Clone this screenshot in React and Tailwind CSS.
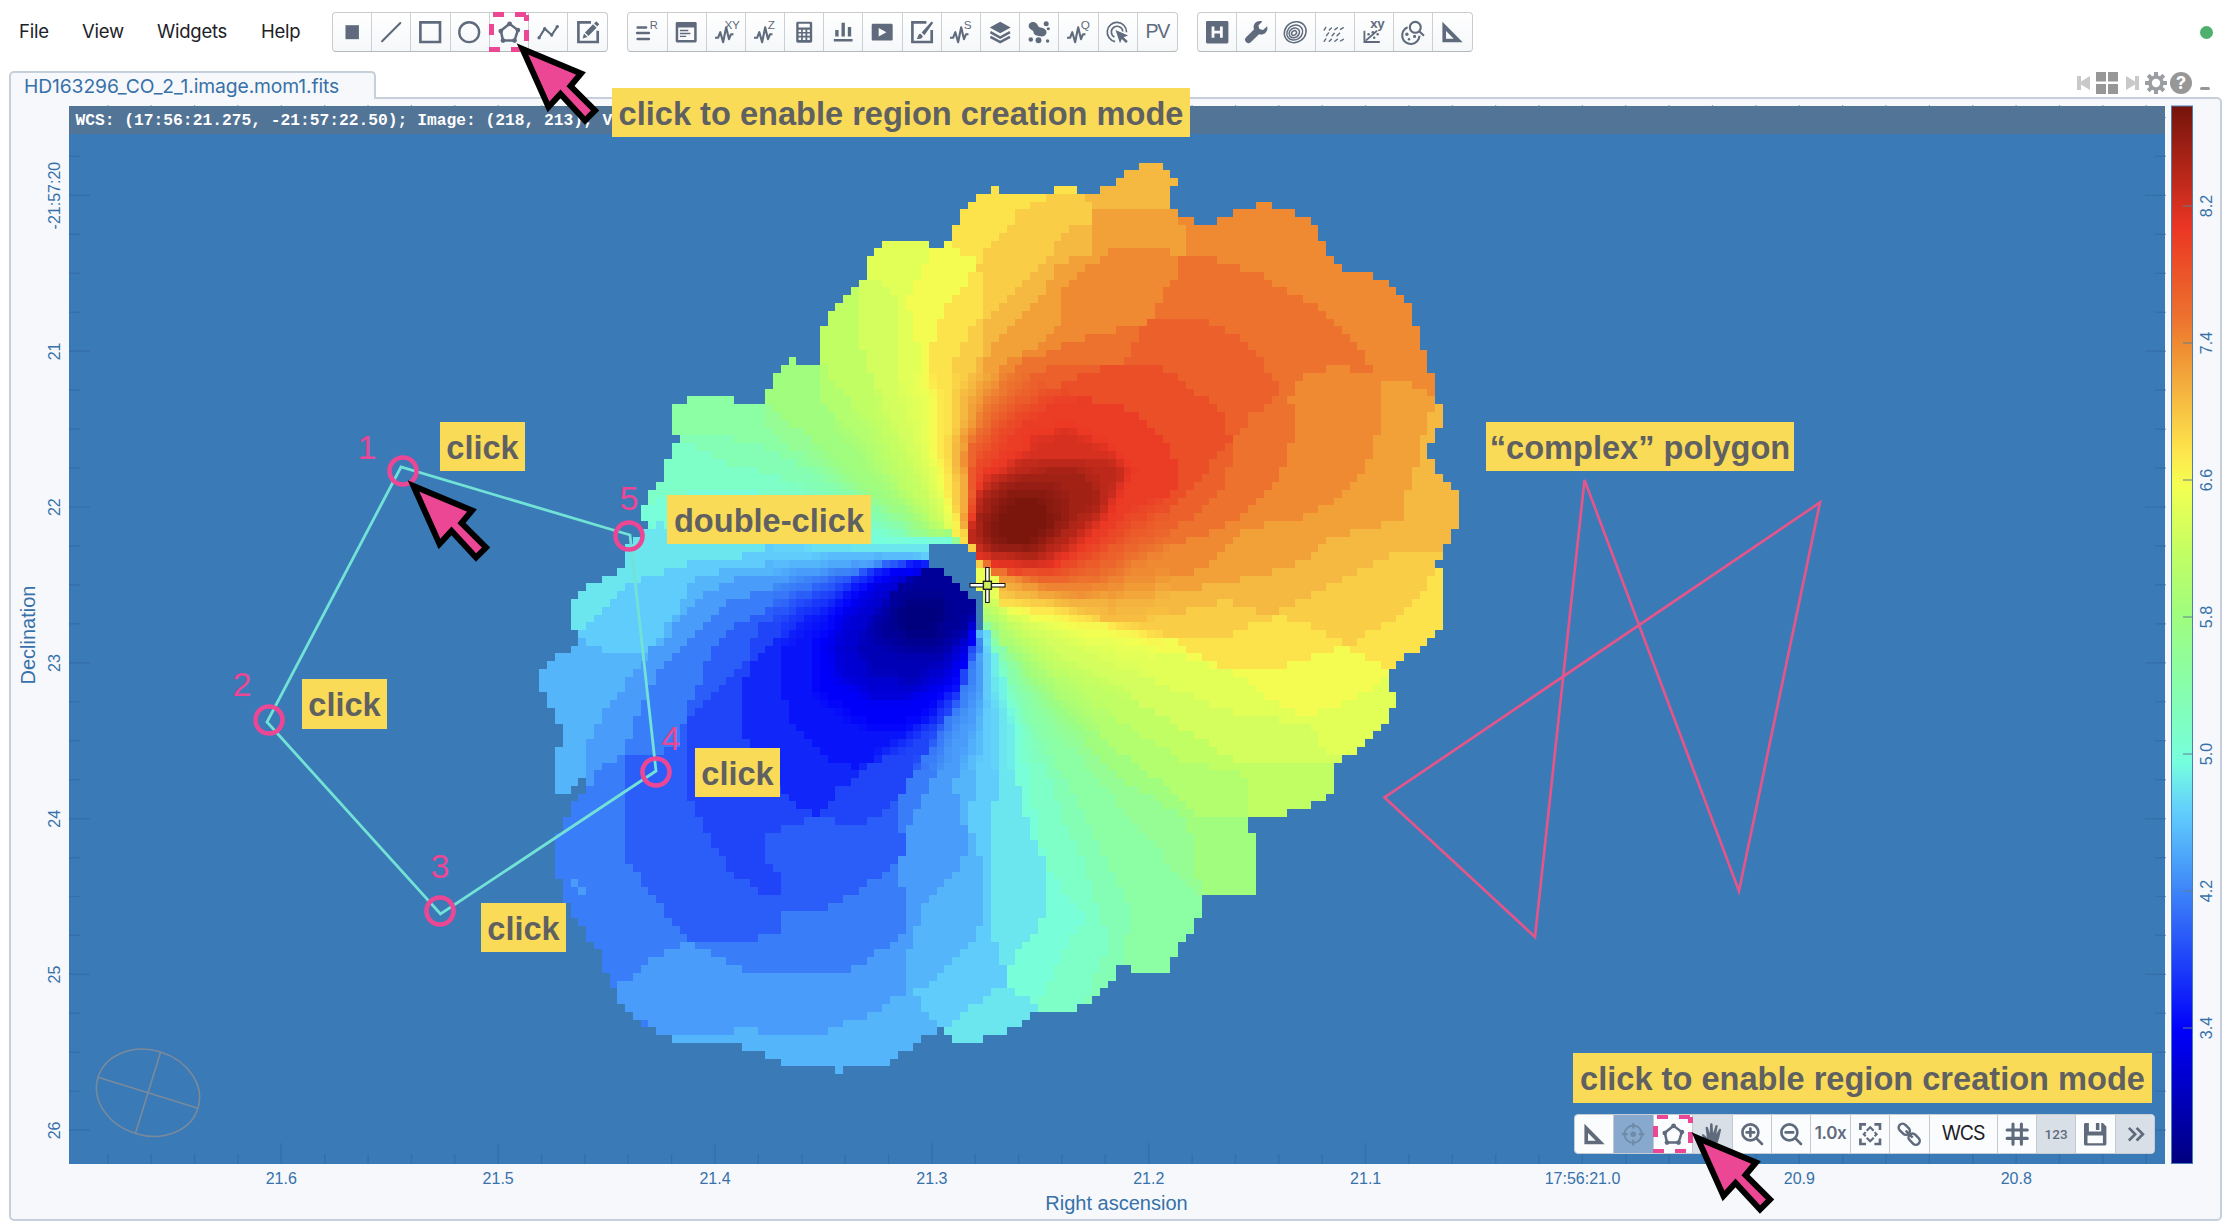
import React from "react";

/* ---------- velocity map ---------- */

const STOPS = [
  [0, 0, 0, 127], [0.125, 0, 0, 250], [0.255, 60, 130, 248], [0.305, 84, 180, 251], [0.335, 98, 208, 252],
  [0.38, 118, 255, 222], [0.45, 136, 254, 172], [0.52, 160, 253, 125], [0.58, 196, 254, 98],
  [0.64, 243, 255, 82], [0.672, 254, 230, 76], [0.725, 245, 184, 64], [0.775, 239, 138, 50], [0.8, 236, 114, 46],
  [0.885, 235, 54, 36], [1, 117, 20, 12],
];

function color(t) {
  const v = Math.max(0, Math.min(1, t));
  for (let i = 1; i < STOPS.length; i++) {
    if (v <= STOPS[i][0]) {
      const a = STOPS[i - 1];
      const b = STOPS[i];
      const f = (v - a[0]) / (b[0] - a[0]);
      return `rgb(${[1, 2, 3].map((k) => Math.round(a[k] + (b[k] - a[k]) * f)).join(",")})`;
    }
  }
  return "rgb(117,20,12)";
}

const pts = (s) => s.trim().split(/\s+/).map((p) => p.split(",").map(Number));

const OUTLINE = pts(`1006,38 1044,38 1044,61 1058,61 1058,85 1070,85 1070,106 1058,106 1058,179 1070,179 1070,202 1096,202 1096,225 1135,225 1135,202 1160,202 1160,179 1199,179 1199,155 1225,155 1225,179 1264,179 1264,202 1290,202 1290,225 1303,225 1303,272 1315,272 1315,318 1328,318 1328,342 1341,342 1341,366 1393,366 1393,389 1418,389 1418,412 1431,412 1431,436 1444,436 1444,459 1457,459 1457,530 1470,530 1470,600 1482,600 1482,670 1495,670 1495,764 1507,764 1507,833 1495,833 1495,880 1482,880 1482,927 1495,927 1495,974 1507,974 1507,997 1520,997 1520,1020 1534,1020 1534,1137 1520,1137 1520,1182 1507,1182 1507,1230 1495,1230 1495,1254 1507,1254
1507,1440 1495,1440 1495,1463 1482,1463 1482,1487 1470,1487 1470,1510 1444,1510 1444,1534 1431,1534 1431,1557 1418,1557 1418,1628 1431,1628 1431,1675 1418,1675 1418,1722 1405,1722 1405,1745 1393,1745 1393,1768 1380,1768 1380,1792 1367,1792 1367,1815 1341,1815 1341,1839 1328,1839 1328,1932 1315,1932 1315,1955 1290,1955 1290,1979 1251,1979 1251,2002 1187,2002 1187,2049 1199,2049 1199,2235 1109,2235 1109,2307 1096,2307 1096,2353 1083,2353 1083,2376 1070,2376 1070,2423 1058,2423 1058,2470 993,2470 993,2447 967,2447 967,2493 954,2493 954,2517 941,2517 941,2540 928,2540 928,2563 903,2563 903,2586 826,2586 826,2610 813,2610 813,2633 787,2633 787,2656 749,2656 749,2679 697,2679 697,2656 684,2656 684,2633 672,2633 672,2656 646,2656 646,2679 633,2679 633,2703 607,2703 607,2726 594,2726 594,2749 517,2749 517,2772 504,2772 504,2749 415,2749 415,2726 389,2726 389,2703 350,2703 350,2679 235,2679 235,2656 209,2656 209,2633 184,2633 184,2610 170,2610 170,2586 158,2586 158,2563 145,2563 145,2517 132,2517 132,2470 119,2470 119,2400 106,2400 106,2376 93,2376 93,2330 80,2330 80,2307 67,2307 67,2260 54,2260 54,2188 41,2188 41,2049 54,2049 54,2002 67,2002 67,1955 80,1955 80,1932 93,1932 93,1885 80,1885 80,1908 67,1908 67,1932 41,1932 41,1792 54,1792 54,1722 41,1722 41,1675 28,1675 28,1628 15,1628 15,1557 28,1557 28,1534 41,1534 41,1510 67,1510 67,1487 80,1487 80,1440 67,1440
67,1350 80,1350 80,1324 93,1324 93,1300 119,1300 119,1277 145,1277 145,1254 158,1254 158,1206 158,1182 170,1182 170,1160 184,1160 184,1137 196,1137 196,1112 184,1112 184,1067 196,1067 196,1020 209,1020 209,997 222,997 222,927 235,927 235,880 248,880 248,857 235,857 235,764 261,764 261,740 338,740 338,764 389,764 389,717 402,717 402,670 415,670 415,646 427,646 427,622 440,622 440,646 479,646 479,530 492,530 492,482 504,482 504,459 517,459 517,436 530,436 530,412 543,412 543,389 556,389 556,318 569,318 569,295 582,295 582,272 658,272 658,295 684,295 684,272 697,272 697,225 710,225 710,179 723,179 723,155 736,155 736,131 762,131 762,108 775,108 775,131 864,131 864,108 903,108 903,131 941,131 941,108 967,108 967,85 980,85 980,61 1006,61`);

const HOLE = pts("658,1182 723,1182 723,1206 736,1206 736,1324 749,1324 749,1440 736,1440 736,1350 723,1350 723,1324 710,1324 710,1300 697,1300 697,1277 684,1277 684,1254 658,1254");

const LEVELS = [
  // receding side, from the green fan inwards
  [0.415, "600,1160 440,1050 300,1010 180,1070 100,900 100,0 1600,0 1600,2800 838,2800 838,2560 915,2300 850,2150 810,1750 755,1480 700,1170"],
  [0.44, "620,1165 460,1010 330,940 245,860 200,800 200,0 1600,0 1600,2800 920,2800 920,2540 955,2380 925,2200 880,2000 800,1620 755,1440 700,1170"],
  [0.46, "640,1165 520,1020 400,900 320,857 200,857 200,0 1600,0 1600,2800 975,2800 975,2380 1000,2300 930,2050 870,1850 790,1560 755,1430 700,1170"],
  [0.49, "645,1160 540,1030 430,890 389,820 389,700 389,0 1600,0 1600,2236 1109,2236 1050,2130 1000,2030 930,1870 870,1740 800,1540 755,1420 700,1160"],
  [0.52, "655,1150 560,1030 480,900 402,770 389,740 389,0 1600,0 1600,2236 1105,2236 1096,2110 1085,2010 980,1890 880,1700 800,1530 755,1410 700,1150"],
  [0.55, "665,1140 590,1000 530,870 479,750 479,0 1600,0 1600,2003 1100,2003 1080,1950 970,1800 870,1640 800,1500 758,1400 700,1140"],
  [0.575, "670,1140 600,980 556,820 500,700 479,640 479,0 1600,0 1600,2003 1187,2003 1185,1880 1080,1830 960,1700 850,1540 760,1390 700,1140"],
  [0.597, "680,1130 610,900 569,720 543,560 543,380 543,0 1600,0 1600,1839 1170,1839 1090,1750 980,1630 870,1530 770,1385 700,1130"],
  [0.618, "690,1130 650,950 607,700 607,450 580,400 540,390 540,0 1600,0 1600,1815 1320,1815 1280,1720 1140,1680 1030,1590 900,1490 775,1375 700,1120"],
  [0.642, "697,1130 660,900 650,700 635,540 620,450 660,320 670,280 670,0 1600,0 1600,1575 1410,1575 1370,1640 1280,1695 1230,1660 1175,1580 1120,1540 1000,1490 880,1440 775,1370"],
  [0.672, "703,1130 672,900 660,600 685,480 723,400 735,330 697,290 690,0 1600,0 1600,1580 1415,1580 1400,1535 1345,1490 1240,1550 1145,1555 1060,1470 900,1410 775,1365"],
  [0.698, "706,1130 690,900 697,750 705,600 745,500 750,400 736,350 775,260 810,180 870,131 905,131 910,0 1600,0 1600,1235 1507,1235 1457,1370 1400,1430 1355,1490 1300,1440 1240,1395 1150,1455 1040,1460 970,1425 870,1380 775,1350"],
  [0.725, "712,1130 700,900 715,720 745,600 752,500 790,430 830,370 880,260 890,225 928,225 928,160 915,131 915,0 1600,0 1600,1230 1495,1215 1430,1205 1370,1260 1300,1320 1220,1395 1150,1350 1070,1390 960,1420 880,1365 775,1330"],
  [0.75, "716,1130 710,900 725,760 760,600 800,520 850,420 870,340 928,310 930,190 960,179 1068,179 1068,0 1600,0 1600,740 1495,760 1480,800 1475,850 1470,930 1450,1000 1440,1100 1400,1130 1320,1160 1280,1235 1170,1290 1050,1330 960,1360 850,1340 760,1290"],
  [0.775, "720,1130 715,900 740,760 790,630 850,570 878,500 880,410 930,340 970,295 1058,295 1065,320 1083,320 1083,230 1070,200 1070,0 1600,0 1600,740 1490,740 1470,715 1440,695 1405,695 1405,800 1380,960 1300,1090 1180,1140 1110,1260 1000,1300 900,1345 860,1320 760,1275"],
  [0.8, "722,1130 720,900 750,780 800,650 880,580 1030,510 1045,420 1070,370 1068,318 1110,320 1200,370 1290,460 1350,560 1385,640 1393,670 1340,655 1290,660 1250,740 1265,800 1250,920 1220,1020 1150,1130 1040,1200 940,1300 860,1310 760,1265"],
  [0.825, "723,1130 725,900 780,760 850,650 980,640 1018,510 1105,505 1170,560 1210,640 1245,720 1190,800 1160,880 1150,1000 1100,1100 1000,1200 930,1280 850,1295 760,1250"],
  [0.85, "724,1130 735,930 790,780 850,720 955,650 1045,650 1110,740 1150,800 1155,870 1110,980 1070,1060 1000,1140 940,1220 880,1270 790,1270 745,1230"],
  [0.873, "724,1140 740,960 800,820 860,745 925,745 1000,790 1040,860 1070,930 1070,1020 990,1110 940,1190 870,1265 790,1255 740,1230"],
  [0.905, "724,1150 745,990 800,930 840,850 900,835 960,900 990,950 975,1020 940,1130 900,1200 850,1250 780,1240 737,1210"],
  [0.93, "726,1160 750,1000 810,930 965,930 980,960 960,1050 930,1130 890,1190 850,1230 775,1225 737,1205"],
  [0.955, "735,1150 750,1030 800,980 870,950 915,950 940,1010 940,1070 905,1130 870,1180 830,1225 775,1205 745,1180"],
  [0.975, "745,1140 765,1045 790,1000 865,1000 890,1060 890,1110 850,1160 840,1200 770,1200 748,1170"],
  [0.995, "760,1120 790,1050 850,1050 865,1110 840,1170 780,1190 762,1160"],
  // approaching side, from the cyan fan inwards
  [0.358, "655,1190 560,1185 450,1130 320,1080 240,1160 222,1120 160,1150 0,1150 0,2800 838,2800 838,2560 787,2510 790,2450 850,2300 850,2130 830,2060 800,1880 800,1700 765,1500 749,1420 700,1300"],
  [0.333, "650,1210 500,1200 400,1185 350,1220 260,1240 230,1254 170,1300 130,1370 93,1420 80,1440 0,1440 0,2800 684,2800 684,2633 710,2600 750,2540 787,2510 780,2430 765,2350 760,2100 775,1800 765,1600 750,1450 700,1300"],
  [0.305, "648,1215 490,1215 430,1230 280,1275 260,1320 235,1400 205,1510 120,1508 93,1470 80,1445 0,1440 0,2800 684,2800 684,2633 655,2590 635,2530 700,2440 745,2330 750,2160 735,2100 725,2000 752,1700 749,1470 700,1300"],
  [0.28, "646,1222 560,1235 480,1250 330,1290 262,1370 230,1450 195,1510 160,1600 120,1680 106,1740 93,1800 93,1934 0,1934 0,2656 335,2656 340,2635 375,2635 378,2656 480,2656 560,2590 615,2530 625,2400 650,2270 715,2130 725,2060 710,2000 700,1900 748,1650 748,1480 700,1300"],
  [0.252, "645,1225 570,1240 500,1260 400,1310 312,1370 270,1450 220,1540 190,1640 170,1720 158,1810 106,1870 93,1934 0,1934 0,2660 225,2660 145,2570 145,2510 200,2430 265,2375 300,2420 365,2465 440,2470 520,2460 550,2440 620,2350 610,2150 620,2050 660,1900 697,1750 735,1600 745,1480 700,1300"],
  [0.22, "645,1228 580,1240 510,1280 430,1330 370,1400 320,1450 290,1540 260,1690 240,1800 160,1815 158,2120 185,2200 235,2310 265,2370 365,2370 410,2340 425,2270 480,2280 540,2220 600,2150 620,2100 607,2000 600,1960 650,1830 710,1650 735,1500 742,1450 700,1300"],
  [0.192, "645,1230 580,1250 530,1290 450,1350 380,1430 350,1550 265,1690 262,1950 290,2050 325,2150 380,2230 420,2240 410,2180 390,2130 395,2050 470,2005 550,2025 600,1960 660,1780 710,1640 730,1500 740,1440 700,1300"],
  [0.165, "645,1230 570,1265 520,1310 460,1380 400,1480 352,1580 352,1760 400,1880 430,1960 470,2000 510,1920 560,1850 640,1750 700,1640 725,1520 736,1440 700,1300"],
  [0.145, "645,1235 580,1265 530,1310 480,1390 420,1490 420,1650 440,1740 500,1830 540,1855 600,1790 660,1720 700,1640 725,1500 736,1420 700,1300"],
  [0.125, "645,1250 600,1260 550,1310 500,1390 465,1480 470,1620 520,1700 570,1745 620,1740 670,1670 710,1580 736,1440 700,1300"],
  [0.09, "645,1255 600,1280 560,1330 520,1400 495,1500 510,1580 560,1640 620,1650 670,1610 710,1530 736,1420 700,1290"],
  [0.055, "650,1254 610,1300 585,1340 550,1430 530,1500 560,1570 620,1600 650,1590 690,1530 725,1440 736,1380 700,1260"],
  [0.025, "655,1254 620,1300 600,1330 570,1430 580,1480 640,1520 680,1500 720,1430 736,1360 690,1250"],
  [0, "640,1340 605,1380 605,1430 640,1470 670,1450 685,1400 680,1340"],
  // isolated samples and the sliver beside the nucleus
  [0.28, "67,2190 80,2190 80,2212 93,2212 93,2236 80,2236 80,2212 67,2212"],
  [0.63, "736,1254 762,1254 775,1330 760,1370 749,1324 736,1324"],
].map(([t, s]) => [t, pts(s)]);

function inside(poly, x, y) {
  let hit = false;
  for (let i = 0, j = poly.length - 1; i < poly.length; j = i++) {
    const [xi, yi] = poly[i];
    const [xj, yj] = poly[j];
    if (yi > y !== yj > y && x < ((xj - xi) * (y - yi)) / (yj - yi) + xi) hit = !hit;
  }
  return hit;
}

const COLS = 120;
const ROWS = 118;
const CELL = 7.79;

function buildMap() {
  const raw = [];
  for (let r = 0; r < ROWS; r++) {
    const row = [];
    for (let c = 0; c < COLS; c++) {
      const x = 2.7 + (c + 0.5) * 12.857;
      const y = 38 + (r + 0.5) * 23.37;
      let v = null;
      if (inside(OUTLINE, x, y) && !inside(HOLE, x, y)) {
        v = 0.385;
        for (const [t, poly] of LEVELS) if (inside(poly, x, y)) v = t;
      }
      row.push(v);
    }
    raw.push(row);
  }
  const paths = {};
  for (let r = 0; r < ROWS; r++) {
    let start = 0;
    let prev = null;
    for (let c = 0; c <= COLS; c++) {
      let k = null;
      if (c < COLS && raw[r][c] !== null) {
        const v = raw[r][c];
        let sum = v * 2;
        let n = 2;
        // samples far from the nucleus keep their plain contour steps
        const near = Math.hypot(c - 56, r - 52) < 26;
        for (const [dr, dc] of near ? [[0, 1], [1, 0], [0, -1], [-1, 0]] : []) {
          const w = raw[r + dr]?.[c + dc];
          if (w !== null && w !== undefined && Math.abs(w - v) < 0.06) {
            sum += w;
            n += 1;
          }
        }
        k = color(Math.round((sum / n) * 160) / 160);
      }
      if (k !== prev) {
        if (prev) {
          const x0 = Math.round(531.6 + start * CELL);
          const x1 = Math.round(531.6 + c * CELL);
          const y0 = Math.round(162.7 + r * CELL);
          const y1 = Math.round(162.7 + (r + 1) * CELL);
          paths[prev] = (paths[prev] || "") + `M${x0} ${y0}H${x1}V${y1}H${x0}Z`;
        }
        start = c;
        prev = k;
      }
    }
  }
  return Object.entries(paths);
}

const MAP = buildMap();
const range = (a, b) => Array.from({ length: b - a + 1 }, (_, i) => a + i);

const RA = ["21.6", "21.5", "21.4", "21.3", "21.2", "21.1", "17:56:21.0", "20.9", "20.8"];
const DEC = ["-21:57:20", "21", "22", "23", "24", "25", "26"];
const BAR = ["8.2", "7.4", "6.6", "5.8", "5.0", "4.2", "3.4"];
const VERTICES = [[403, 471], [269, 720], [440, 911], [656, 772], [629, 536]];

function Chart() {
  return (
    <svg
      className="block h-[1120px] w-[2209px] [font-family:'Liberation_Sans',sans-serif]"
      viewBox="11 99 2209 1120"
      fill="#3771a9"
    >
      <defs>
        <linearGradient id="bar" x1="0" y1="1" x2="0" y2="0">
          {STOPS.map((s) => (
            <stop key={s[0]} offset={s[0]} stopColor={color(s[0])} />
          ))}
        </linearGradient>
      </defs>
      <rect x="69" y="106" width="2096" height="1058" fill="#397ab7" />
      <g shapeRendering="crispEdges">
        {MAP.map(([k, d]) => (
          <path key={k} fill={k} d={d} />
        ))}
      </g>
      <g stroke="#33619a" strokeOpacity="0.5" strokeWidth="1.2">
        {range(-4, 43).map((i) => {
          const x = 281.3 + i * 43.37;
          const h = i % 5 === 0 ? 21 : 10;
          return <path key={i} d={`M${x} 1164v${-h}M${x} 105v${h}`} />;
        })}
        {range(-2, 24).map((i) => {
          const y = 195.4 + i * 38.95;
          const w = i % 4 === 0 ? 21 : 11;
          return <path key={i} d={`M69 ${y}h${w}M2166 ${y}h${-w}`} />;
        })}
      </g>
      <rect x="69" y="106" width="2096" height="28" fill="#527496" />
      <rect x="2171.5" y="106" width="21" height="1057.5" fill="url(#bar)" stroke="#4a7db3" />
      <g fontSize="16" textAnchor="middle">
        {RA.map((s, i) => (
          <text key={s} x={281.3 + i * 216.87} y="1184">{s}</text>
        ))}
        {DEC.map((s, i) => (
          <text key={s} transform={`translate(60 ${195.6 + i * 155.8}) rotate(-90)`}>{s}</text>
        ))}
        {BAR.map((s, i) => (
          <g key={s}>
            <path d={`M2183 ${206 + i * 137}h9`} stroke="#5f7f8f" />
            <text transform={`translate(2212 ${206 + i * 137}) rotate(-90)`}>{s}</text>
          </g>
        ))}
      </g>
      <g fontSize="20" textAnchor="middle">
        <text x="1116.5" y="1209.5">Right ascension</text>
        <text transform="translate(34.5 635) rotate(-90)">Declination</text>
      </g>
      <g transform="translate(148 1092.7) rotate(17.2)" fill="none" stroke="#7a8a9b" strokeWidth="1.6">
        <ellipse rx="52.3" ry="42.7" />
        <path d="M-52.3 0H52.3M0-42.7V42.7" />
      </g>
      <path d="M401 467L267 722L440.500 914L656 771L630 535Z" fill="none" stroke="#72e2d6" strokeWidth="2.8" />
      <path d="M1584.500 480L1535 937L1384.500 797.500L1820 502.500L1739 891Z" fill="none" stroke="#e4568a" strokeWidth="2.700" />
      <path d="M987.400 567v36M969.500 585.300h36" stroke="#111" strokeWidth="4.6" />
      <path d="M987.400 568v34M970.500 585.300h34" stroke="#fff" strokeWidth="2.4" />
      <rect x="983.400" y="581.300" width="8" height="8" fill="#cdf057" stroke="#222" strokeWidth="1.4" />
      <g fill="none" stroke="#ec4794" strokeWidth="4.600">
        {VERTICES.map(([x, y]) => (
          <circle key={x} cx={x} cy={y} r="13.500" />
        ))}
      </g>
    </svg>
  );
}

/* ---------- icons, on a 16-unit grid ---------- */

const line = { fill: "none", stroke: "currentColor", strokeWidth: 1.5 };

const ICONS = {
  point: <path d="M3.200 3h9.600v10H3.200z" />,
  line: <path d="M1.500 14.500L14.500 1.500" {...line} strokeLinecap="round" />,
  rect: <path d="M1 1h14v14H1z" {...line} strokeWidth="1.900" />,
  circle: <circle cx="8" cy="8" r="7.100" {...line} strokeWidth="1.700" />,
  polygon: (
    <>
      <path d="M8.300 2L2 7l1.600 7h8.200L14.200 6.500z" {...line} strokeWidth="1.800" />
      <circle cx="8.300" cy="2" r="1.700" /><circle cx="2" cy="7.200" r="1.700" /><circle cx="3.600" cy="14" r="1.700" />
      <circle cx="11.800" cy="14" r="1.700" /><circle cx="14.200" cy="6.500" r="1.700" />
    </>
  ),
  polyline: (
    <>
      <path d="M1.500 12L5.500 5.500L10.500 10L14.500 4" {...line} />
      <circle cx="1.500" cy="12" r="1.200" /><circle cx="5.500" cy="5.500" r="1.200" /><circle cx="10.500" cy="10" r="1.200" /><circle cx="14.500" cy="4" r="1.200" />
    </>
  ),
  edit: (
    <>
      <path d="M10 1H1v14h13.800V7" {...line} strokeWidth="1.900" />
      <path d="M4 12.500l1-3.500 2.500 2.500zM5.700 8.200l5.800-5.800 2.500 2.500-5.800 5.800zM12.200 1.700L13.800.2l2.100 2.100-1.400 1.600z" />
    </>
  ),
  listR: (
    <>
      <path d="M1.200 4.700h6M.8 8.500h8.400M1.200 12.900h8" {...line} strokeWidth="1.800" strokeLinecap="round" />
      <text x="9.800" y="5.600" fontSize="8">R</text>
    </>
  ),
  app: (
    <path fillRule="evenodd" d="M1.500.7h13c.6 0 1 .4 1 1v12.600c0 .6-.4 1-1 1h-13c-.6 0-1-.4-1-1V1.700c0-.6.4-1 1-1zM2.300 4.700v8.800h11.400V4.700zM3.500 6.300h6v1h-6zM3.500 8.400h7.500v1H3.500zM3.500 10.500h4.500v1H3.500z" />
  ),
  wave: <path d="M0 11h2.200l1.600-4 2 7.200L8 3.500l2 8.500 1.400-3.500h1.800" {...line} strokeWidth="1.500" strokeLinejoin="round" transform="translate(0 1)" />,
  calc: (
    <path fillRule="evenodd" d="M3.500.5h9c.8 0 1.200.5 1.200 1.200v12.600c0 .7-.4 1.200-1.200 1.200h-9c-.8 0-1.200-.5-1.200-1.200V1.700c0-.7.400-1.200 1.200-1.200zM4 2v2.600h8V2zM4 6.200v1.600h1.800V6.200zM7 6.200v1.600h1.900V6.200zM10.200 6.200v1.600H12V6.200zM4 9v1.600h1.800V9zM7 9v1.600h1.900V9zM10.200 9v1.600H12V9zM4 11.800v1.700h1.800v-1.700zM7 11.800v1.700h1.900v-1.700zM10.200 11.800v1.700H12v-1.700z" />
  ),
  bars: <path d="M2.300 6.500h2.400V11H2.300zM6.800 1.300h2.400V11H6.800zM11.300 4.300h2.400V11h-2.400zM1.300 12.800h13.400v1.800H1.300z" />,
  video: <path fillRule="evenodd" d="M1.500 2h13c.6 0 1 .4 1 1v10c0 .6-.4 1-1 1h-13c-.6 0-1-.4-1-1V3c0-.6.4-1 1-1zM5.500 5v6l5.500-3z" />,
  brush: (
    <>
      <path d="M11 1H1v14h13.800V6.500" {...line} strokeWidth="1.900" />
      <path d="M4 12.700c1.300-.6.6-3.200 2.800-3.500l1.600 1.600c0 2-2.400 2.500-4.400 1.900zM7.600 8.300L14.600.4l1.300.9-6.300 8.900z" />
    </>
  ),
  layers: (
    <>
      <path d="M8 .5L15.500 4.600 8 8.700.5 4.600z" />
      <path d="M1 8l7 3.800L15 8M1 11.300l7 3.800 7-3.800" {...line} strokeWidth="1.800" />
    </>
  ),
  blobs: (
    <>
      <path d="M.5 3.800C.3 1.500 2.800 0 5 1c2.300 1 1.600 3.200 4 3.700 2.500.4 5 1.800 4 4.500-.9 2.400-3.500 2-5.200 1.500C5.500 10.200 4 9.800 4 8 4 6.500.7 6.200.5 3.800z" />
      <circle cx="13" cy="2" r="1.800" /><circle cx="2" cy="13.300" r="1.600" /><circle cx="7.500" cy="13.800" r="2.100" /><circle cx="14" cy="14.300" r="1.200" /><circle cx="14.500" cy="5.500" r="1.100" />
    </>
  ),
  cursorTarget: (
    <>
      <path d="M6.500 14.700A6.900 6.900 0 1 1 14.700 8M6 11.500A4.100 4.100 0 1 1 12 7.500" {...line} strokeWidth="1.200" />
      <path d="M6.800 6.500l9 3.800-3.200 1.300 3 2.900-1.300 1.300-3-3-1.300 3.100z" />
    </>
  ),
  header: <path fillRule="evenodd" d="M1 0h14c.6 0 1 .4 1 1v14c0 .6-.4 1-1 1H1c-.6 0-1-.4-1-1V1c0-.6.4-1 1-1zM4 4v8h2V9h4v3h2V4h-2v3H6V4z" />,
  wrench: <path d="M15.800 3.800l-2.900 2.700-2.600-.7-.7-2.500L12.400.4c-2-.8-4.100-.2-5.300 1.200C6 3 6 4.500 6.400 6L.8 11.700a2.200 2.200 0 0 0 3.300 3.400L10 9.400c1.600.5 3.200.3 4.500-.8 1.300-1.200 1.900-3 1.300-4.800z" />,
  contour: (
    <g {...line} strokeWidth="1.050" transform="rotate(-35 8 8)">
      <ellipse cx="8" cy="8" rx="8.100" ry="7.200" /><ellipse cx="7.600" cy="8" rx="5.900" ry="5.100" /><ellipse cx="7.200" cy="8" rx="3.900" ry="3.300" /><ellipse cx="7" cy="8" rx="1.900" ry="1.500" />
    </g>
  ),
  vectors: (
    <path d="M.8 6.500l1.200-2M4.500 6.500l1.500-1.500M8.500 6.200l1.800-1.400M12.500 6l2-1.200M2.500 10.500l1.500-2M6.500 10.500L8 8.800M10 10.500l1.800-1.800M.8 14.500l1.200-1.700M4.500 14.500l1.500-1.500M8.500 14.500l1.800-1.500M12.500 14.300l2-1.200" {...line} strokeWidth="1" strokeLinecap="round" />
  ),
  scatter: (
    <>
      <path d="M1 7v8h11M2 14l8-7" {...line} strokeWidth="1.300" />
      <circle cx="4" cy="9.500" r=".9" /><circle cx="7" cy="8" r=".9" /><circle cx="8" cy="12" r=".9" /><circle cx="10.500" cy="9.500" r=".9" />
      <text x="5.200" y="5" fontSize="9.500" fontWeight="bold">xy</text>
    </>
  ),
  catalog: (
    <>
      <circle cx="9.500" cy="4.500" r="3.900" {...line} />
      <path d="M12.300 7.300l3.400 3.200M4 4.500a6.200 6.200 0 1 0 8.500 6" {...line} />
      <circle cx="3.500" cy="9.500" r="1.200" /><circle cx="9" cy="11" r="1.100" /><circle cx="5" cy="13" r=".9" />
    </>
  ),
  setSquare: <path fillRule="evenodd" d="M1 .5L15.500 15.200H1zM3.600 7.200v5.500h5.500z" />,
  locate: (
    <g>
      <circle cx="8" cy="8" r="6.200" {...line} strokeWidth="1.300" /><circle cx="8" cy="8" r="2" />
      <path d="M8 0v4M8 12v4M0 8h4M12 8h4" {...line} strokeWidth="1.600" />
    </g>
  ),
  hand: <path d="M6 15.500C4 14 2.300 11.500.8 9.200c-.5-.9.6-1.500 1.400-.8l2 1.900L3.300 3.600c-.1-1.100 1.400-1.300 1.700-.3l1.200 4.200L6.500 1C6.600-.2 8.200-.2 8.300 1l.3 6.300L10.300 2c.4-1 1.800-.6 1.600.4l-1 5.500 2-3.400c.6-.8 1.700-.2 1.400.7-.9 3-1.200 7.300-3.300 10.300z" />,
  zoomIn: <path d="M11.200 11.200L15 15M6.700 4v5.400M4 6.700h5.400M12.400 6.700a5.700 5.700 0 1 1-11.400 0 5.700 5.700 0 0 1 11.400 0z" {...line} strokeWidth="1.900" strokeLinecap="round" />,
  zoomOut: <path d="M11.200 11.200L15 15M4 6.700h5.400M12.400 6.700a5.700 5.700 0 1 1-11.400 0 5.700 5.700 0 0 1 11.400 0z" {...line} strokeWidth="1.900" strokeLinecap="round" />,
  fit: (
    <>
      <path d="M1 5V1h4M11 1h4v4M15 11v4h-4M5 15H1v-4" {...line} strokeWidth="1.900" />
      <path d="M5.500 5.500L8 3l2.500 2.500M5.500 10.500L8 13l2.500-2.500M4.800 6.500L3.400 8l1.400 1.500M11.200 6.500L12.600 8l-1.400 1.500" {...line} strokeWidth="1.500" />
    </>
  ),
  link: (
    <g {...line} strokeWidth="1.800" transform="rotate(45 8 8)">
      <rect x="-1.500" y="5.200" width="9" height="5.600" rx="2.800" /><rect x="8.500" y="5.200" width="9" height="5.600" rx="2.800" /><path d="M4.500 8h7" />
    </g>
  ),
  grid: <path d="M5 .8v14.400M11 .8v14.400M.8 5h14.400M.8 11h14.400" {...line} strokeWidth="2.200" strokeLinecap="round" />,
  save: <path fillRule="evenodd" d="M1 0h2.500v6h8.800V0H13.500L16 2.500V15c0 .6-.4 1-1 1H1c-.6 0-1-.4-1-1V1c0-.6.4-1 1-1zM8.500 0h2.500v5H8.500zM2.500 9v5.500h11V9z" />,
  chevrons: <path d="M3.500 3.500L8 8l-4.500 4.500M9 3.500L13.500 8 9 12.500" {...line} strokeWidth="1.900" />,
};

function Icon({ name, sup }) {
  return (
    <svg className="h-[22.400px] w-[22.400px] overflow-visible [font-family:'Liberation_Sans',sans-serif]" viewBox="0 0 16 16" fill="currentColor">
      {ICONS[name]}
      {sup && <text x={sup.length > 1 ? 6.8 : 9.8} y="5.400" fontSize="8.400">{sup}</text>}
    </svg>
  );
}

const Dashes = () => (
  <svg className="absolute -inset-px h-[40px] w-[40px]" viewBox="0 0 40 40" fill="#ec4794">
    <path d="M4 0h11v5H4zM26 0h11v3h3v6h-5V5h-9zM0 12h5v11H0zM35 18h5v11h-5zM0 35h11v5H0zM22 35h11v5H22z" />
  </svg>
);

function Group({ items }) {
  return (
    <div className="flex h-[40px] divide-x divide-[#cdd0d2] rounded-[4px] border border-[#c9ccce] border-b-[#b3b8bb] bg-gradient-to-b from-white to-[#f5f7f9] text-[#5f6b7c]">
      {items.map(([name, sup], i) => (
        <div key={i} className="relative flex w-[39.2px] items-center justify-center">
          {name === "pv" ? (
            <span className="text-[19.500px] tracking-[-1.2px] [font-family:'Liberation_Sans',sans-serif]">PV</span>
          ) : (
            <Icon name={name} sup={sup} />
          )}
          {name === "polygon" && <Dashes />}
        </div>
      ))}
    </div>
  );
}

const G1 = [["point"], ["line"], ["rect"], ["circle"], ["polygon"], ["polyline"], ["edit"]];
const G2 = [["listR"], ["app"], ["wave", "XY"], ["wave", "Z"], ["calc"], ["bars"], ["video"], ["brush"], ["wave", "S"], ["layers"], ["blobs"], ["wave", "Q"], ["cursorTarget"], ["pv"]];
const G3 = [["header"], ["wrench"], ["contour"], ["vectors"], ["scatter"], ["catalog"], ["setSquare"]];

function ImageToolbar() {
  const cell = "relative flex w-[39.4px] items-center justify-center";
  return (
    <div className="absolute left-[1574px] top-[1114px] flex h-[40px] w-[581px] divide-x divide-[#c5cad0] overflow-hidden rounded-[4px] border border-[#c5ccd4] bg-[#fbfcfd] text-[#5f6b7c]">
      <div className={cell}><Icon name="setSquare" /></div>
      <div className="flex w-[39.4px] items-center justify-center bg-[#86a9cd] text-[#6f8ba9]"><Icon name="locate" /></div>
      <div className={cell}><Icon name="polygon" /><Dashes /></div>
      <div className="flex w-[39.4px] items-center justify-center bg-[#d9dfe6]"><Icon name="hand" /></div>
      <div className={cell}><Icon name="zoomIn" /></div>
      <div className={cell}><Icon name="zoomOut" /></div>
      <div className="flex w-[39.4px] items-center justify-center text-[17px] font-semibold tracking-[-0.3px]">1.0x</div>
      <div className={cell}><Icon name="fit" /></div>
      <div className={cell}><Icon name="link" /></div>
      <div className="flex w-[68px] items-center justify-center text-[19.500px] tracking-[-1.100px] text-[#1c2127]">WCS</div>
      <div className={cell}><Icon name="grid" /></div>
      <div className="flex w-[39.4px] items-center justify-center bg-[#d9dfe6] text-[13.500px] font-medium [font-family:Roboto,sans-serif]">123</div>
      <div className={cell}><Icon name="save" /></div>
      <div className="flex grow items-center justify-center bg-[#d9dfe6]"><Icon name="chevrons" /></div>
    </div>
  );
}

function Arrow({ className }) {
  return (
    <svg className={"absolute h-[86px] w-[86px] overflow-visible " + className} viewBox="0 0 86 86">
      <path d="M5.500 6L64 30.500L53.500 43L78 67.500L68 77.500L43.500 51L31.500 64Z" fill="#ec4794" stroke="#000" strokeWidth="6" strokeMiterlimit="8" />
    </svg>
  );
}

function Note({ className, children }) {
  return (
    <div className={"absolute flex items-center justify-center whitespace-nowrap bg-[#fadb57] pt-[3px] text-[32.600px] font-bold leading-none text-[#5f6062] [font-family:'Liberation_Sans',sans-serif] " + className}>
      {children}
    </div>
  );
}

function Num({ className, children }) {
  return (
    <div className={"absolute w-[20px] text-center text-[34px] leading-[34px] text-[#ec4794] [font-family:'Liberation_Sans',sans-serif] " + className}>
      {children}
    </div>
  );
}

function PanelControls() {
  return (
    <div className="flex h-[24px] items-center pr-[13px]">
      <svg className="mr-[6px] h-[14px] w-[13px]" viewBox="0 0 13 14" fill="#c9c9c9"><path d="M0 0h4v5.500L13 0v14L4 8.500V14H0z" /></svg>
      <svg className="mr-[8px] h-[22px] w-[22px]" viewBox="0 0 22 22" fill="#979797"><path d="M0 0h10v9.500H0zM12 0h10v9.500H12zM0 12h10v10H0zM12 12h10v10H12z" /></svg>
      <svg className="mr-[6px] h-[14px] w-[13px]" viewBox="0 0 13 14" fill="#c9c9c9"><path d="M13 0H9v5.500L0 0v14l9-5.500V14h4z" /></svg>
      <svg className="mr-[3px] h-[22px] w-[22px]" viewBox="-11 -11 22 22" fill="none" stroke="#9a9ea2">
        <circle r="6" strokeWidth="3.600" />
        {range(0, 7).map((i) => (
          <path key={i} d="M0-7V-11" strokeWidth="4" transform={`rotate(${i * 45})`} />
        ))}
      </svg>
      <div className="mr-[8px] flex h-[22px] w-[22px] items-center justify-center rounded-full bg-[#979797] text-[18px] font-bold leading-none text-white">?</div>
      <div className="mt-[10px] h-[3px] w-[10px] rounded-sm bg-[#979797]" />
    </div>
  );
}

export default function App() {
  return (
    <div className="relative h-[1232px] w-[2232px] overflow-hidden bg-white [font-family:Inter,sans-serif]">
      <header className="flex h-[64px] items-center pl-[19px] pr-[19px] text-[18.500px] tracking-[-0.25px] text-[#1c2127]">
        <nav className="flex w-[313px]">
          <span className="w-[63px]">File</span>
          <span className="w-[75px]">View</span>
          <span className="w-[104px]">Widgets</span>
          <span>Help</span>
        </nav>
        <div className="flex gap-[19px]">
          <Group items={G1} />
          <Group items={G2} />
          <Group items={G3} />
        </div>
        <div className="ml-auto h-[13px] w-[13px] rounded-full bg-[#4fb06d]" />
      </header>

      <div className="mt-[7px] flex h-[26px] items-start justify-between px-[9px]">
        <div className="relative z-10 flex h-[28px] w-[367px] items-center rounded-t-[5px] border-2 border-b-0 border-[#c5d0dc] bg-[#f6f8fb] pl-[13px] pt-px text-[19.300px] text-[#3771a9]">
          <span className="whitespace-nowrap leading-none tracking-[-0.11px]">HD163296_CO_2_1.image.mom1.fits</span>
        </div>
        <PanelControls />
      </div>

      <main className="ml-[9px] h-[1124px] w-[2213px] rounded-[5px] rounded-tl-none border-2 border-[#c5d0dc] bg-[#f6f8fb]">
        <Chart />
      </main>

      <div className="absolute left-[75.500px] top-[107px] flex h-[28px] items-center whitespace-pre text-[16.270px] font-bold text-white [font-family:'Liberation_Mono',monospace]">
        WCS: (17:56:21.275, -21:57:22.50); Image: (218, 213); V
      </div>

      <ImageToolbar />

      <Note className="left-[612px] top-[88px] h-[49px] w-[578px]">click to enable region creation mode</Note>
      <Note className="left-[440px] top-[422px] h-[49px] w-[85px]">click</Note>
      <Note className="left-[302px] top-[679px] h-[50px] w-[85px]">click</Note>
      <Note className="left-[481px] top-[903px] h-[49px] w-[85px]">click</Note>
      <Note className="left-[695px] top-[748px] h-[49px] w-[85px]">click</Note>
      <Note className="left-[667px] top-[495px] h-[49px] w-[204px]">double-click</Note>
      <Note className="left-[1486px] top-[422px] h-[49px] w-[308px]">“complex” polygon</Note>
      <Note className="left-[1573px] top-[1053px] h-[50px] w-[579px]">click to enable region creation mode</Note>

      <Num className="left-[357px] top-[430px]">1</Num>
      <Num className="left-[232px] top-[667px]">2</Num>
      <Num className="left-[430px] top-[849px]">3</Num>
      <Num className="left-[661px] top-[721px]">4</Num>
      <Num className="left-[619px] top-[481px]">5</Num>

      <Arrow className="left-[517px] top-[43px]" />
      <Arrow className="left-[408px] top-[480px]" />
      <Arrow className="left-[1692px] top-[1132px]" />
    </div>
  );
}
